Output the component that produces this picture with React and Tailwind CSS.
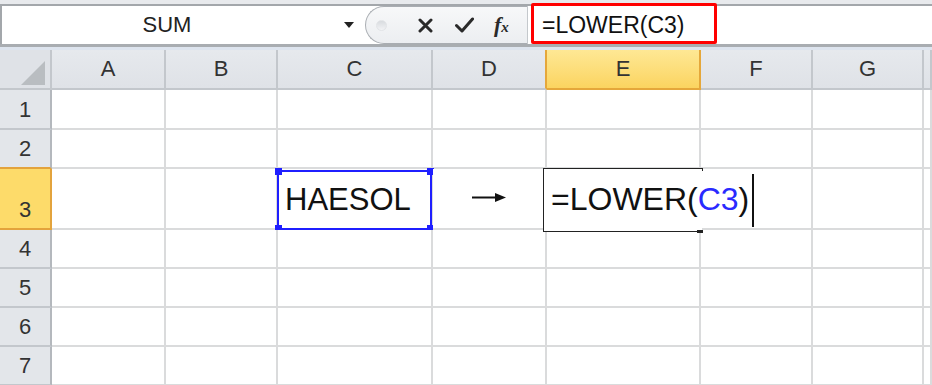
import React from "react";

const COLS = ["A", "B", "C", "D", "E", "F", "G", ""];
const ROWS = [1, 2, 3, 4, 5, 6, 7];

const FormulaBar = () => (
  <div className="flex flex-col">
    <div className="h-[4px] bg-[#e8eaed]" />
    <div className="h-[2px] bg-[#a3a7ab]" />
    <div className="flex h-[38px] bg-white">
      {/* name box */}
      <div className="flex w-[362px] items-center border-l-2 border-[#a3a7ab]">
        <div className="w-[330px] text-center text-[22px] leading-none text-[#222]">SUM</div>
        <svg width="10" height="6" viewBox="0 0 10 6" className="ml-[12px]">
          <path d="M0 0h10L5 6z" fill="#222" />
        </svg>
      </div>
      {/* buttons pill */}
      <div className="ml-[3px] flex h-[38px] w-[162px] items-center rounded-l-[19px] border border-r-0 border-[#a9adb2] bg-gradient-to-b from-[#f7f8f9] to-[#eceef1]">
        <div className="ml-[10px] h-[11px] w-[11px] rounded-full border border-[#e2e4e7] bg-gradient-to-b from-[#d8dbdf] to-[#f2f3f5]" />
        <svg width="15" height="15" viewBox="0 0 15 15" className="ml-[31px]">
          <path d="M2 2L13 13M13 2L2 13" stroke="#2a2a2a" strokeWidth="3" strokeLinecap="round" />
        </svg>
        <svg width="19" height="16" viewBox="0 0 19 16" className="ml-[22px]">
          <path d="M1.5 8.5L7 14L17.5 2" stroke="#2a2a2a" strokeWidth="3" fill="none" strokeLinecap="round" strokeLinejoin="round" />
        </svg>
        <span className="ml-[20px] font-['Liberation_Serif',serif] text-[22px] font-bold italic leading-none text-[#2a2a2a]">
          f<span className="text-[15px]">x</span>
        </span>
      </div>
      <div className="w-[1px] bg-[#c4c8cc]" />
      {/* formula input */}
      <div className="relative flex flex-1 items-center pl-[14px]">
        <span className="text-[23px] leading-none text-[#111]">=LOWER(C3)</span>
        <div className="absolute left-[3px] top-[-3px] h-[41px] w-[186px] rounded-[2px] border-[3px] border-[#ff0000]" />
      </div>
    </div>
    <div className="h-[3px] bg-[#a9adb1]" />
    <div className="h-[3px] bg-[#dde4ee]" />
  </div>
);

const ColHeader = ({ label }) => {
  const active = label === "E";
  const beforeActive = label === "D";
  return (
    <div
      className={
        "flex items-center justify-center border-b-2 border-r-2 text-[22px] leading-none text-[#333] " +
        (active
          ? "bg-gradient-to-b from-[#fee894] to-[#fbd45f] border-[#e5a73a]"
          : beforeActive
          ? "bg-gradient-to-b from-[#e6e9ed] to-[#dfe2e7] border-b-[#c3c7cc] border-r-[#e5a73a]"
          : "bg-gradient-to-b from-[#e6e9ed] to-[#dfe2e7] border-b-[#c3c7cc] border-r-[#c3c7cc]")
      }
    >
      {label}
    </div>
  );
};

const RowHeader = ({ n }) => {
  const active = n === 3;
  const beforeActive = n === 2;
  return (
    <div
      className={
        "flex items-end justify-center border-b-2 border-r-2 pb-[7px] text-[22px] leading-[22px] text-[#333] " +
        (active
          ? "bg-[#fddb6a] border-[#e3a33c]"
          : beforeActive
          ? "bg-[#e3e6ea] border-b-[#e3a33c] border-r-[#b4b8bd]"
          : "bg-[#e3e6ea] border-b-[#c3c7cc] border-r-[#b4b8bd]")
      }
    >
      {n}
    </div>
  );
};

const Handle = ({ pos }) => (
  <div className={"absolute h-[7px] w-[7px] bg-[#1f1fff] " + pos} />
);

const Cell = ({ row, col }) => {
  const base = "relative border-b-2 border-r-2 border-[#dadbdc] bg-white";
  if (row === 3 && col === "C") {
    return (
      <div className={base + " flex items-end pb-[13px] pl-[7px]"}>
        <span className="text-[31px] leading-[31px] text-[#111]">HAESOL</span>
        <div className="absolute left-[-1px] top-[1px] h-[60px] w-[155px] border-2 border-[#1f1fff]">
          <Handle pos="left-[-4px] top-[-4px]" />
          <Handle pos="right-[-4px] top-[-4px]" />
          <Handle pos="left-[-4px] bottom-[-4px]" />
          <Handle pos="right-[-4px] bottom-[-4px]" />
        </div>
      </div>
    );
  }
  if (row === 3 && col === "D") {
    return (
      <div className={base + " flex justify-center pt-[24px]"}>
        <svg width="34" height="9" viewBox="0 0 34 9">
          <path d="M0 4.5H26" stroke="#111" strokeWidth="2" />
          <path d="M34 4.5L23 0V9z" fill="#111" />
        </svg>
      </div>
    );
  }
  if (row === 3 && col === "E") {
    return (
      <div className={base}>
        <div className="absolute left-[-4px] top-[-1px] z-10 h-[64px] w-[159px] border-b border-l border-t border-[#222] bg-white">
          <div className="absolute right-[-1px] top-[-1px] h-[3px] w-[1px] bg-[#222]" />
          <div className="absolute bottom-[-2px] right-[-1px] h-[3px] w-[6px] bg-[#222]" />
          <div className="absolute left-[7px] top-[5px] flex items-start whitespace-nowrap">
            <span className="mt-[9px] text-[32px] leading-[32px] text-[#111]">
              =LOWER(<span className="text-[#2a2aff]">C3</span>)
            </span>
            <div className="ml-[3px] h-[53px] w-[2px] bg-[#111]" />
          </div>
        </div>
      </div>
    );
  }
  return <div className={base} />;
};

export default function App() {
  return (
    <div className="h-[385px] w-[932px] overflow-hidden bg-white font-['Liberation_Sans',Arial,sans-serif]">
      <FormulaBar />
      <div className="grid grid-cols-[52px_114px_112px_155px_114px_154px_112px_111px_1fr] grid-rows-[40px_40px_39px_61px_39px_39px_39px_39px]">
        <div className="relative border-b-2 border-r-2 border-[#c3c7cc] bg-[#dfe2e7]">
          <svg width="24" height="24" viewBox="0 0 24 24" className="absolute bottom-[3px] right-[5px]">
            <path d="M24 0V24H0z" fill="#b9bdc1" />
          </svg>
        </div>
        {COLS.map((c, i) => (
          <ColHeader key={"h" + i} label={c} />
        ))}
        {ROWS.map((r) => (
          <React.Fragment key={r}>
            <RowHeader n={r} />
            {COLS.map((c, i) => (
              <Cell key={r + "-" + i} row={r} col={c} />
            ))}
          </React.Fragment>
        ))}
      </div>
    </div>
  );
}
